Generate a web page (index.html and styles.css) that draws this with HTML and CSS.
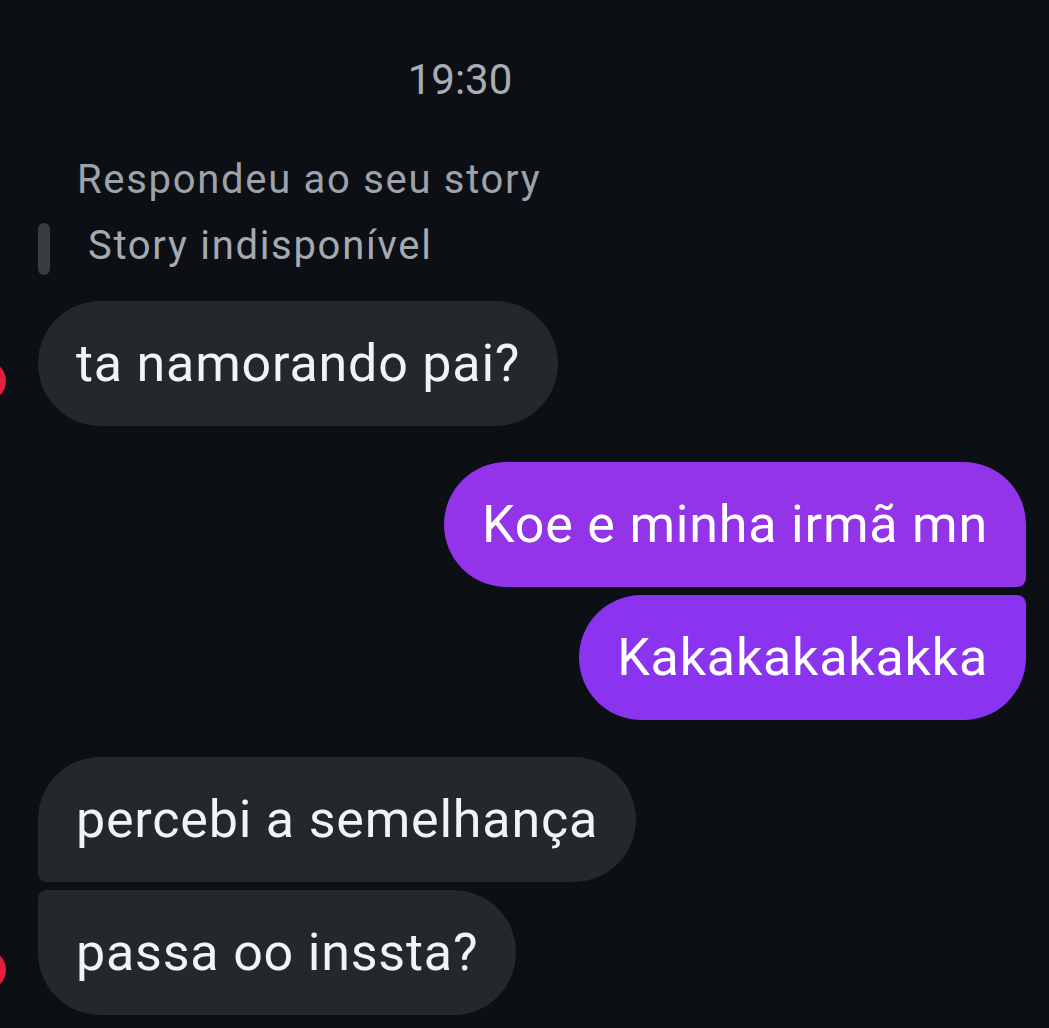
FILE: index.html
```html
<!DOCTYPE html>
<html lang="pt">
<head>
    <meta charset="UTF-8">
    <meta name="viewport" content="width=device-width, initial-scale=1.0">
    <title>Chat</title>
    <link rel="stylesheet" href="styles.css">
</head>
<body>
    <!-- Conversa -->
    <div class="chat">
        <div class="time">19:30</div>

        <!-- Resposta ao story -->
        <div class="reply-label">Respondeu ao seu story</div>
        <div class="story-quote">
            <span class="quote-bar"></span>
            <span class="quote-text">Story indisponível</span>
        </div>

        <div class="row in first">
            <span class="avatar"></span>
            <div class="bubble gray">ta namorando pai?</div>
        </div>

        <div class="row out">
            <div class="bubble purple top">Koe e minha irmã mn</div>
        </div>
        <div class="row out tight">
            <div class="bubble purple bottom">Kakakakakakka</div>
        </div>

        <div class="row in spaced">
            <div class="bubble gray in-top">percebi a semelhança</div>
        </div>
        <div class="row in tight">
            <span class="avatar"></span>
            <div class="bubble gray in-bottom">passa oo inssta?</div>
        </div>
    </div>
</body>
</html>
```

FILE: styles.css
```css
/* Base */
body {
    margin: 0;
    background: #0c0f14;
    font-family: Roboto, "Noto Sans", sans-serif;
    overflow: hidden;
    height: 1028px;
}

.chat {
    padding-right: 23px;
}

.time {
    width: 920px;
    text-align: center;
    color: #a8aeb6;
    font-size: 42px;
    line-height: 50px;
    padding-top: 55px;
}

/* Story reply */
.reply-label {
    color: #9da3ab;
    font-size: 40px;
    line-height: 48px;
    letter-spacing: 1.7px;
    padding-left: 77px;
    margin-top: 51px;
}

.story-quote {
    display: flex;
    align-items: center;
    padding-left: 38px;
    margin-top: 19px;
}

.quote-bar {
    width: 12px;
    height: 52px;
    border-radius: 6px;
    background: #383b41;
}

.quote-text {
    color: #a4aab2;
    font-size: 40px;
    line-height: 48px;
    letter-spacing: 1.7px;
    margin-left: 38px;
    position: relative;
    top: -3px;
}

/* Message rows */
.row {
    display: flex;
    align-items: flex-end;
}

.row.in {
    padding-left: 38px;
}

.row.out {
    justify-content: flex-end;
    margin-top: 36px;
}

.row.first {
    margin-top: 26px;
}

.row.spaced {
    margin-top: 37px;
}

.row.tight {
    margin-top: 8px;
}

.avatar {
    width: 40px;
    height: 40px;
    border-radius: 50%;
    background: #e0203c;
    margin-left: -72px;
    margin-right: 32px;
    margin-bottom: 25px;
    flex-shrink: 0;
}

.bubble {
    font-size: 52px;
    line-height: 61px;
    letter-spacing: 0.8px;
    padding: 32px 38px;
    border-radius: 63px;
    white-space: nowrap;
}

.bubble.gray {
    background: #24272c;
    color: #f2f3f5;
}

.bubble.purple {
    color: #ffffff;
}

.bubble.purple.top {
    background: #9434e9;
    border-bottom-right-radius: 9px;
}

.bubble.purple.bottom {
    background: #8a34ef;
    border-top-right-radius: 9px;
}

.bubble.in-top {
    border-bottom-left-radius: 9px;
}

.bubble.in-bottom {
    border-top-left-radius: 9px;
}
```
